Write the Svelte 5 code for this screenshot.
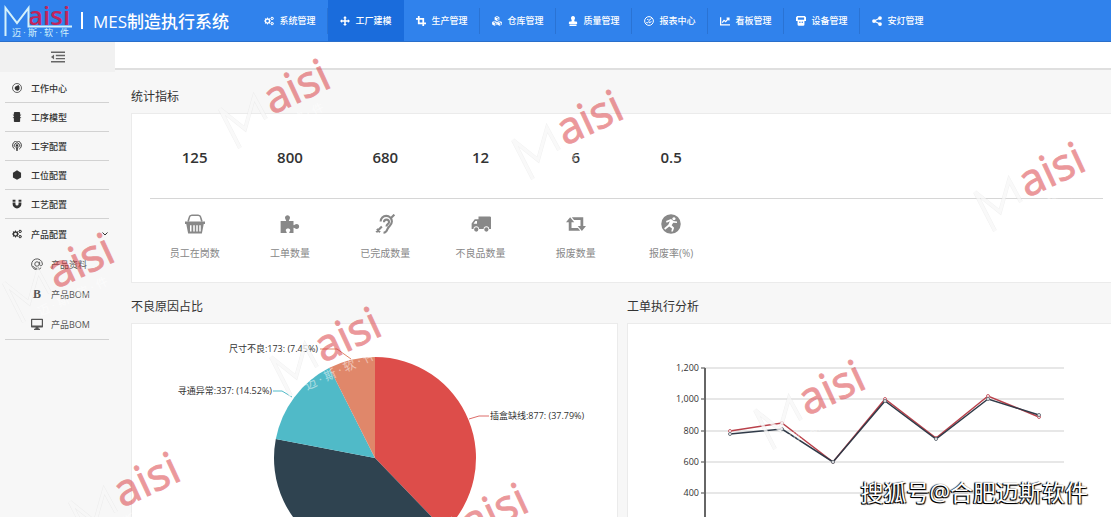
<script lang="ts">
  type Glyph = { fill?: string; line?: string; width?: number };

  const disc = (cx: number, cy: number, r: number) =>
    `M${cx - r} ${cy}a${r} ${r} 0 1 0 ${2 * r} 0a${r} ${r} 0 1 0 ${-2 * r} 0z`;

  function gear(cx: number, cy: number, r: number, teeth: number, hole: number) {
    const pts: string[] = [];
    for (let i = 0; i < teeth * 4; i++) {
      const a = ((i - 0.5) / (teeth * 4)) * Math.PI * 2;
      const rad = i % 4 < 2 ? r : r * 0.76;
      pts.push(`${(cx + rad * Math.cos(a)).toFixed(2)} ${(cy + rad * Math.sin(a)).toFixed(2)}`);
    }
    return `M${pts.join('L')}z${disc(cx, cy, hole)}`;
  }

  const cube = (x: number, y: number) =>
    `M${x} ${y - 4}l3.8 1.8v4.2l-3.8 2l-3.8-2v-4.2zM${x} ${y - 3}l-2.2 1.1l2.2 1l2.2-1zM${x + 0.5} ${y + 0.4}v2.5l2.2-1.2v-2.3z`;

  const cogs = gear(5.6, 8, 5.6, 8, 2.2) + gear(13, 3.8, 2.9, 6, 1) + gear(13, 12.2, 2.9, 6, 1);

  const glyphs: Record<string, Glyph> = {
    cogs: { fill: cogs },
    move: { fill: 'M8 0l3 3.4H9.2v3.4h3.4V5L16 8l-3.4 3V9.2H9.2v3.4H11L8 16l-3-3.4h1.8V9.2H3.4V11L0 8l3.4-3v1.8h3.4V3.4H5z' },
    crop: { fill: 'M3 0h2.8v10.2H16V13h-3v3h-2.8v-3H3V5.8H0V3h3zM5.8 3H13v7.2h-2.8V5.8H5.8z' },
    cubes: { fill: cube(8, 4) + cube(4, 11.6) + cube(12, 11.6) },
    stamp: { fill: 'M8 0a3.4 3.4 0 0 1 2.6 5.4c-.9 1.2-.4 2.6.2 3.2H13a1.6 1.6 0 0 1 1.6 1.6v2.4H1.4v-2.4A1.6 1.6 0 0 1 3 8.6h2.2c.6-.6 1.1-2 .2-3.2A3.4 3.4 0 0 1 8 0zM2.4 13.6h11.2V16H2.4z' },
    gauge: { line: disc(8, 8, 7) + 'M3.5 10.5c2 1.5 5-1 4.5-3.5l4-3M5 5.5h2M8 11l4-2', width: 1.6 },
    trend: { line: 'M1 2v12h15M3.5 10.5l3-3.5l2.5 2l4.5-5M10.5 3.5h3.8v3.8', width: 2 },
    machine: { fill: 'M2 0h12l2 2v6h-2.5v5.5a2 2 0 0 1-2 2h-7a2 2 0 0 1-2-2V8H0V2zM3 2.5V6h10V2.5zM5 10a1.2 1.2 0 1 0 2.4 0A1.2 1.2 0 1 0 5 10zM8.8 10a1.2 1.2 0 1 0 2.4 0a1.2 1.2 0 1 0-2.4 0z' },
    share: { fill: disc(3.2, 8, 3) + disc(12.8, 3.2, 3) + disc(12.8, 12.8, 3), line: 'M12.8 3.2L3.2 8l9.6 4.8', width: 1.8 },
    outdent: { fill: 'M0 8l3.5-2.8v5.6z', line: 'M0 2.5h16M5.5 6.2H16M5.5 9.8H16M0 13.5h16', width: 1.6 },
    target: { fill: 'M8 4.5l2.5-1.5l1.5 3v4a4 4 0 1 1-7-4z', line: disc(8, 8, 7.2), width: 1.2 },
    server: { fill: 'M4 0h8l1 1v3.5l2-.5l-2 2.5v2l2-.5l-2 2.5V15l-1 1H4l-1-1v-4.5L1 8l2 .5v-2L1 4l2 .5V1z' },
    podcast: { fill: disc(8, 7, 2) + 'M6.5 10h3L9 16H7z', line: 'M4.5 13a7 7 0 1 1 7 0M5.8 10.3a4 4 0 1 1 4.4 0', width: 1.5 },
    hexagon: { fill: 'M8 .5l6.5 3.7v7.6L8 15.5l-6.5-3.7V4.2z' },
    magnet: { fill: 'M1 1h4.5v3.5H1zM10.5 1H15v3.5h-4.5zM1 5.5h4.5V8a2.5 2.5 0 0 0 5 0V5.5H15V8A7 7 0 0 1 1 8z' },
    swirl: { line: 'M13.5 13A7.2 7.2 0 1 1 15.2 8c0 3-3.7 3-3.7.5V5M11 8a3 3 0 1 1-6 0a3 3 0 0 1 6 0M3 11c1 3 5 3.5 7.5 2.2', width: 1.3 },
    desktop: { fill: 'M1 1h14a1 1 0 0 1 1 1v9.5a1 1 0 0 1-1 1H9.8l.7 1.8h1.5V16H4v-1.7h1.5l.7-1.8H1a1 1 0 0 1-1-1V2a1 1 0 0 1 1-1zM1.6 2.6v7.4h12.8V2.6z' },
    chevron: { line: 'M3 5l5 5l5-5', width: 2 },
    basket: { fill: 'M0 6h16v2h-1l-1.5 7.5h-11L1 8H0zM4 9v5h1.2V9zM6.6 9v5h1.2V9zM9 9v5h1.2V9zM11.4 9v5h1.2V9z', line: 'M2.5 6l1-3.5Q3.8 1 5.5 1h5q1.7 0 2 1.5l1 3.5', width: 1.3 },
    puzzle: { fill: 'M.5 5.5h4.3c.5-.6-.8-1.2-.8-2.5C4 .3 8 .3 8 3c0 1.3-1.3 1.9-.8 2.5h3.6v3.3c.6.5 1.2-.8 2.5-.8c2.7 0 2.7 4 0 4c-1.3 0-1.9-1.3-2.5-.8v4H7.5c-.5-.8.7-1.2.7-2.2c0-2-3.6-2-3.6 0c0 1 1.2 1.4.7 2.2H.5z' },
    deaf: { line: 'M4.5 6a4.5 4.5 0 0 1 9 0c0 3-2.5 3.5-3.5 6c-.6 1.8-1.5 3-3.2 3M7.2 6.5a2 2 0 0 1 4 0c0 1.5-2 1.7-2 3.5M1 14.5L5.5 10M13 3l2.5-2.5M1.5 12l2.5 2.5', width: 1.7 },
    truck: { fill: 'M6 2h9.4l.6.6V12h-1.5a2.2 2.2 0 0 0-4.4 0H6.4a2.2 2.2 0 0 0-4.4 0H.5V7.5L3 4.2h3zM3.5 5.6L2 7.8h2.8V5.6z' + disc(4.2, 12.4, 1.7) + disc(12.3, 12.4, 1.7) },
    retweet: { fill: 'M3.3 2.5L6.6 6.5H4.4v4.6h5.2l1.7 2.2H2.2V6.5H0zM4.7 2.5h9.1v7H16l-3.3 4l-3.3-4h2.2V4.7H6.4z' },
    runner: { fill: disc(8, 8, 7.8) + 'M10.3 2.5a1.3 1.3 0 1 0 .1 0zM4 5.5l4-1.5l2 1.5l2.8.5v1.2l-3-.2l-1.3 2l2 2l-1 3H8.2l.6-2.5L6.6 10l-3.3 2.5l-.8-1.2L5.8 8.5l1.3-2.7L4.5 7z' },
  };

  const menus = [
    { icon: 'cogs', label: '系统管理' },
    { icon: 'move', label: '工厂建模' },
    { icon: 'crop', label: '生产管理' },
    { icon: 'cubes', label: '仓库管理' },
    { icon: 'stamp', label: '质量管理' },
    { icon: 'gauge', label: '报表中心' },
    { icon: 'trend', label: '看板管理' },
    { icon: 'machine', label: '设备管理' },
    { icon: 'share', label: '安灯管理' },
  ];
  let activeMenu = $state(1);

  const sideItems = [
    { icon: 'target', label: '工作中心' },
    { icon: 'server', label: '工序模型' },
    { icon: 'podcast', label: '工字配置' },
    { icon: 'hexagon', label: '工位配置' },
    { icon: 'magnet', label: '工艺配置' },
  ];
  const subItems = [
    { icon: 'swirl', label: '产品资料' },
    { icon: 'bold', label: '产品BOM' },
    { icon: 'desktop', label: '产品BOM' },
  ];
  let groupOpen = $state(true);

  const stats = [
    { value: '125', icon: 'basket', label: '员工在岗数' },
    { value: '800', icon: 'puzzle', label: '工单数量' },
    { value: '680', icon: 'deaf', label: '已完成数量' },
    { value: '12', icon: 'truck', label: '不良品数量' },
    { value: '6', icon: 'retweet', label: '报废数量' },
    { value: '0.5', icon: 'runner', label: '报废率(%)' },
  ];

  // pie
  const pie = { cx: 243, cy: 134, r: 101 };
  const shares = [
    { pct: 37.79, color: '#dd4d4a' },
    { pct: 40.24, color: '#2f4350' },
    { pct: 14.52, color: '#50bac8' },
    { pct: 7.45, color: '#e0876a' },
  ];
  function onCircle(pct: number) {
    const a = (pct / 100) * Math.PI * 2;
    return `${(pie.cx + pie.r * Math.sin(a)).toFixed(2)} ${(pie.cy - pie.r * Math.cos(a)).toFixed(2)}`;
  }
  const slices = shares.map((s, i) => {
    const from = shares.slice(0, i).reduce((sum, x) => sum + x.pct, 0);
    return {
      color: s.color,
      d: `M${pie.cx} ${pie.cy}L${onCircle(from)}A${pie.r} ${pie.r} 0 0 1 ${onCircle(from + s.pct)}z`,
    };
  });

  // line chart
  const ticks = [1200, 1000, 800, 600, 400];
  const planned = [800, 850, 600, 1000, 755, 1020, 890];
  const finished = [780, 810, 600, 990, 750, 1000, 900];
  const px = (i: number) => Math.round(102 + i * 51.5);
  const py = (v: number) => Math.round(44 + (1200 - v) * 0.1567);
  const points = (values: number[]) => values.map((v, i) => `${px(i)},${py(v)}`).join(' ');

  const marks = [
    [272, 115], [565, 146], [1027, 198], [56, 289],
    [323, 363], [122, 508], [470, 539], [807, 416],
  ];
</script>

{#snippet icon(name: string)}
  <svg class="icon" viewBox="0 0 16 16" aria-hidden="true">
    {#if glyphs[name].fill}
      <path d={glyphs[name].fill} fill="currentColor" fill-rule="evenodd" />
    {/if}
    {#if glyphs[name].line}
      <path d={glyphs[name].line} fill="none" stroke="currentColor" stroke-width={glyphs[name].width} />
    {/if}
  </svg>
{/snippet}

<div class="app">
  <header class="header">
    <a class="brand" href="#home">
      <svg class="logo" width="74" height="36" viewBox="0 0 74 36" role="img" aria-label="Maisi 迈斯软件">
        <text x="28" y="22" class="logo-name">aisi</text>
        <path d="M5.5 33V5L17 20L28.5 5V23.5H72" fill="none" stroke="#d4f1fb" stroke-width="2" />
        <text x="12" y="33" class="logo-sub">迈 · 斯 · 软 · 件</text>
      </svg>
      <span class="bar"></span>
      <span class="product">MES制造执行系统</span>
    </a>
    <nav class="menu">
      {#each menus as item, i}
        <button class:active={activeMenu === i} onclick={() => (activeMenu = i)}>
          {@render icon(item.icon)}
          <span>{item.label}</span>
        </button>
      {/each}
    </nav>
  </header>

  <div class="body">
    <aside class="sidebar">
      <button class="toggle" aria-label="收起菜单">{@render icon('outdent')}</button>
      <nav class="side-nav">
        {#each sideItems as item}
          <a class="side-item" href="#side">{@render icon(item.icon)}<span>{item.label}</span></a>
        {/each}
        <div class="group">
          <button class="group-head" aria-expanded={groupOpen} onclick={() => (groupOpen = !groupOpen)}>
            {@render icon('cogs')}
            <span>产品配置</span>
            <span class="caret">{@render icon('chevron')}</span>
          </button>
          {#if groupOpen}
            {#each subItems as item}
              <a class="sub-item" href="#sub">
                {#if item.icon === 'bold'}
                  <b class="bold-mark">B</b>
                {:else}
                  {@render icon(item.icon)}
                {/if}
                <span>{item.label}</span>
              </a>
            {/each}
          {/if}
        </div>
      </nav>
    </aside>

    <main class="main">
      <div class="tabs"></div>
      <div class="content">
        <section>
          <h2>统计指标</h2>
          <div class="card stats">
            <div class="row values">
              {#each stats as s}<strong>{s.value}</strong>{/each}
            </div>
            <hr />
            <div class="row">
              {#each stats as s}
                <div class="stat">{@render icon(s.icon)}<span>{s.label}</span></div>
              {/each}
            </div>
          </div>
        </section>

        <div class="charts">
          <section>
            <h2>不良原因占比</h2>
            <div class="card">
              <svg class="chart" viewBox="0 0 485 270">
                {#each slices as s}
                  <path d={s.d} fill={s.color} />
                {/each}
                <path d="M337 95l10-3h10" class="lead" stroke="#dd6d6a" />
                <path d="M160 73l-10-6h-9" class="lead" stroke="#50bac8" />
                <path d="M219 35l-14-10h-17" class="lead" stroke="#e0876a" />
                <text x="358" y="95">插盒缺线:877: (37.79%)</text>
                <text x="140" y="70" text-anchor="end">寻通异常:337: (14.52%)</text>
                <text x="186" y="28" text-anchor="end">尺寸不良:173: (7.45%)</text>
              </svg>
            </div>
          </section>
          <section>
            <h2>工单执行分析</h2>
            <div class="card">
              <svg class="chart" viewBox="0 0 485 270">
                {#each ticks as t}
                  <path d="M77 {py(t)}H436" stroke="#cfcfcf" />
                  <path d="M73 {py(t)}H77" stroke="#444" />
                  <text x="71" y={py(t) + 3} text-anchor="end">{t.toLocaleString('en-US')}</text>
                {/each}
                <path d="M77 44V232" stroke="#666" stroke-width="2" />
                <polyline points={points(planned)} class="series" stroke="#b9404a" />
                {#each planned as v, i}
                  <circle cx={px(i)} cy={py(v)} r="1.5" fill="#fff" stroke="#c8606a" />
                {/each}
                <polyline points={points(finished)} class="series" stroke="#2f3a48" />
                {#each finished as v, i}
                  <circle cx={px(i)} cy={py(v)} r="1.5" fill="#fff" stroke="#6a737c" />
                {/each}
              </svg>
            </div>
          </section>
        </div>
      </div>
    </main>
  </div>

  <svg class="marks" aria-hidden="true">
    {#each marks as [x, y]}
      <g transform="translate({x} {y})">
        <path d="M-32 33L-52 -6L-27 14L-18 -18L-6 4" class="mark-edge" />
        <path d="M-32 33L-52 -6L-27 14L-18 -18L-6 4" class="mark-core" />
        <g transform="rotate(-25)">
          <text class="mark-name">aisi</text>
          <text x="-26" y="18" class="mark-sub">迈 · 斯 · 软 · 件</text>
        </g>
      </g>
    {/each}
  </svg>
  <div class="credit">搜狐号@合肥迈斯软件</div>
</div>

<style>
  :global(body) {
    margin: 0;
    background: #f7f7f7;
  }

  .app {
    position: relative;
    display: flex;
    flex-direction: column;
    height: 100vh;
    overflow: hidden;
    background: #f7f7f7;
    color: #333;
    font-family: 'Open Sans', 'Noto Sans CJK SC', sans-serif;
    font-size: 9px;
  }

  button {
    border: none;
    background: none;
    padding: 0;
    color: inherit;
    font: inherit;
    cursor: pointer;
  }

  a {
    color: inherit;
    text-decoration: none;
  }

  .icon {
    width: 10px;
    height: 10px;
    flex-shrink: 0;
  }

  .header {
    display: flex;
    box-sizing: border-box;
    height: 42px;
    flex-shrink: 0;
    background: #3082ec;
    border-bottom: 1px solid #2a6fca;
    color: #fff;
  }

  .brand {
    display: flex;
    align-items: center;
    width: 252px;
    flex-shrink: 0;
    white-space: nowrap;
  }

  .logo {
    flex-shrink: 0;
    overflow: visible;
  }

  .logo-name {
    font-size: 26px;
    font-weight: 600;
    fill: #c2245c;
  }

  .logo-sub {
    font-size: 9px;
    fill: #d4f1fb;
  }

  .bar {
    width: 2px;
    height: 17px;
    margin: 0 10px 0 7px;
    background: #fff;
  }

  .product {
    font-size: 17px;
    font-weight: 500;
  }

  .menu {
    display: flex;
  }

  .menu button {
    display: flex;
    align-items: center;
    justify-content: center;
    gap: 5px;
    width: 76px;
    font-weight: 500;
    background: linear-gradient(#2a73d4, #2a73d4) right center / 1px 26px no-repeat;
  }

  .menu button.active {
    background: #1a6cdc;
  }

  .menu button:last-child {
    background: none;
  }

  .body {
    display: flex;
    flex: 1;
    min-height: 0;
  }

  .sidebar {
    width: 115px;
    flex-shrink: 0;
  }

  .toggle {
    display: flex;
    align-items: center;
    justify-content: center;
    width: 100%;
    height: 30px;
    background: #f1f1f1;
    color: #666;
  }

  .toggle .icon {
    width: 14px;
    height: 14px;
  }

  .side-nav {
    padding: 2px 6px 0 5px;
    font-weight: 500;
  }

  .side-item,
  .group-head,
  .sub-item {
    display: flex;
    align-items: center;
    gap: 9px;
    box-sizing: border-box;
    padding-left: 7px;
  }

  .side-item {
    height: 29px;
    border-bottom: 1px solid #d2d2d2;
  }

  .group {
    border-bottom: 1px solid #d2d2d2;
  }

  .group-head {
    width: 100%;
    height: 30px;
  }

  .caret {
    margin-left: auto;
  }

  .caret .icon {
    width: 8px;
    height: 8px;
  }

  .sub-item {
    height: 30px;
    gap: 8px;
    padding-left: 26px;
    color: #555;
    font-weight: 400;
  }

  .sub-item .icon {
    width: 12px;
    height: 12px;
  }

  .bold-mark {
    width: 12px;
    text-align: center;
    font-family: 'Liberation Serif', serif;
    font-size: 12px;
  }

  .main {
    flex: 1;
    min-width: 0;
    overflow: hidden;
  }

  .tabs {
    height: 26px;
    background: #fff;
    border-bottom: 2px solid #dfdfdf;
  }

  .content {
    padding: 18px 0 0 16px;
    margin-right: -3px;
  }

  h2 {
    margin: 0 0 7px;
    font-size: 12px;
    font-weight: 400;
    line-height: 18px;
  }

  .card {
    background: #fff;
    border: 1px solid #ebebeb;
  }

  .stats {
    padding: 31px 13px 22px 15px;
  }

  .row {
    display: grid;
    grid-template-columns: repeat(10, 1fr);
    justify-items: center;
  }

  .values strong {
    font-size: 15px;
    font-weight: 600;
    line-height: 24px;
  }

  hr {
    margin: 29px -3px 15px 3px;
    border: none;
    border-top: 1px solid #d6d6d6;
  }

  .stat {
    display: flex;
    flex-direction: column;
    align-items: center;
    gap: 12px;
    color: #888;
    font-size: 10px;
    line-height: 14px;
    white-space: nowrap;
  }

  .stat .icon {
    width: 20px;
    height: 20px;
  }

  .charts {
    display: grid;
    grid-template-columns: 1fr 1fr;
    gap: 9px;
    margin-top: 15px;
  }

  .chart {
    display: block;
    width: 100%;
    font-size: 9px;
    fill: #333;
  }

  .lead {
    fill: none;
  }

  .series {
    fill: none;
    stroke-width: 1.5;
  }

  .marks {
    position: absolute;
    inset: 0;
    width: 100%;
    height: 100%;
    pointer-events: none;
  }

  .mark-name {
    font-size: 44px;
    fill: #d8343a;
    stroke: #d8343a;
    opacity: 0.5;
  }

  .mark-edge {
    fill: none;
    stroke: #ddd;
    stroke-width: 4;
    opacity: 0.4;
  }

  .mark-core {
    fill: none;
    stroke: #fff;
    stroke-width: 3;
    opacity: 0.6;
  }

  .mark-sub {
    font-size: 12px;
    fill: #fff;
    opacity: 0.5;
  }

  .credit {
    position: absolute;
    right: 23px;
    bottom: 8px;
    color: #fff;
    font-size: 23px;
    line-height: 34px;
    text-shadow: -1px 0 1px #000, 1px 1px 1px #000, -1px 1px 0 #000;
    pointer-events: none;
  }
</style>
